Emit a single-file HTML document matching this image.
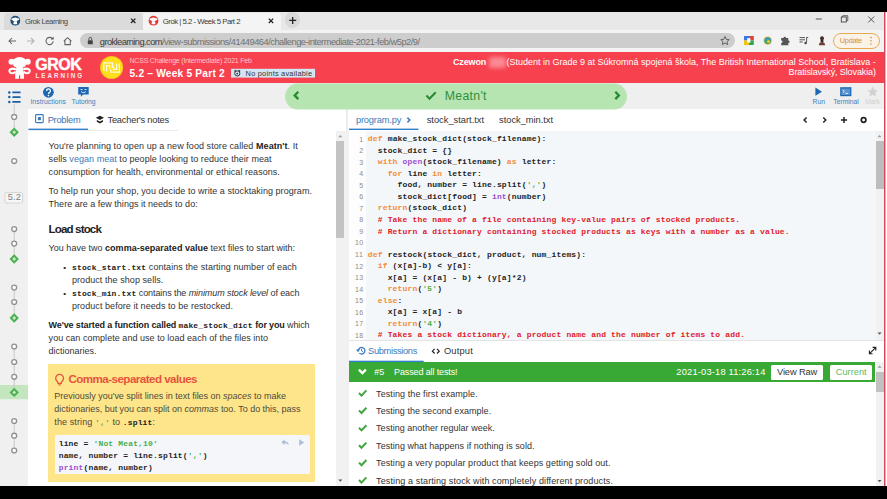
<!DOCTYPE html>
<html lang="en"><head><meta charset="utf-8"><title>Grok | 5.2 - Week 5 Part 2</title>
<style>
*{box-sizing:border-box;margin:0;padding:0}
html,body{width:887px;height:499px;overflow:hidden;background:#fff}
body{position:relative;font-family:"Liberation Sans",sans-serif;color:#333}
.a{position:absolute}
.t{position:absolute;white-space:pre}
.t span{white-space:pre}
svg{position:absolute;overflow:visible}
</style></head><body>
<!-- window chrome -->
<div class="a" style="left:0;top:0;width:887px;height:12px;background:#000"></div>
<div class="a" style="left:0;top:12px;width:884px;height:18px;background:#e8e8e8"></div>
<div class="a" style="left:4px;top:13px;width:139px;height:16.5px;background:#dbdbdb;border-radius:4px 4px 0 0"></div>
<div class="a" style="left:143px;top:13px;width:138px;height:17px;background:#f4f4f4;border-radius:4px 4px 0 0"></div>
<div class="a" style="left:284.8px;top:12px;width:15.6px;height:15.6px;border-radius:50%;background:#d9d9d9"></div>
<div class="a" style="left:0;top:29.5px;width:884px;height:22.5px;background:#f3f3f3"></div>
<div class="a" style="left:80px;top:33px;width:655px;height:15px;border-radius:7.5px;background:#cdcdcd"></div>
<div class="a" style="left:832.5px;top:33px;width:47px;height:15.5px;border-radius:8px;border:1px solid #e9a953;background:#fbf3e8"></div>
<!-- grok header -->
<div class="a" style="left:0;top:52px;width:884px;height:31px;background:#f7414f"></div>
<div class="a" style="left:0;top:83px;width:884px;height:26px;background:#efefef"></div>
<!-- left sidebar / problem pane -->
<div class="a" style="left:0;top:109px;width:28px;height:377px;background:#f0f0f0"></div>
<div class="a" style="left:28px;top:109px;width:316px;height:377px;background:#fff"></div>
<div class="a" style="left:28px;top:130px;width:150px;height:1px;background:#ededed"></div>
<div class="a" style="left:336px;top:131px;width:12.5px;height:355px;background:#f1f1f1"></div>
<div class="a" style="left:336px;top:141px;width:8px;height:97px;background:#c3c3c3"></div>
<div class="a" style="left:346px;top:109px;width:1.5px;height:22px;background:#ececec"></div>
<!-- right pane -->
<div class="a" style="left:349px;top:131px;width:535px;height:209.5px;background:#fdfdfd"></div>
<div class="a" style="left:366px;top:131px;width:510px;height:209.5px;background:#f4f7fa"></div>
<div class="a" style="left:875.5px;top:131px;width:8.5px;height:209.5px;background:#f1f1f1"></div>
<div class="a" style="left:349px;top:340px;width:535px;height:1px;background:#e4e4e4"></div>
<div class="a" style="left:875.5px;top:141px;width:8px;height:48px;background:#bdbdbd"></div>
<div class="a" style="left:349px;top:362px;width:526px;height:20px;background:#39a935"></div>
<div class="a" style="left:771px;top:365px;width:52px;height:14.5px;background:#fff;border-radius:1.5px"></div>
<div class="a" style="left:829.5px;top:365px;width:42.5px;height:14.5px;background:#fff;border-radius:1.5px"></div>
<div class="a" style="left:875.5px;top:362px;width:8.5px;height:124px;background:#f1f1f1"></div>
<div class="a" style="left:875.5px;top:371.5px;width:8px;height:20px;background:#c1c1c1"></div>
<!-- hint box -->
<div class="a" style="left:48.2px;top:364px;width:266.6px;height:118px;background:#fee58a"></div>
<div class="a" style="left:55px;top:434.5px;width:254.5px;height:39.5px;background:#f4f6f9;border-radius:1.5px"></div>
<svg width="887" height="499" viewBox="0 0 887 499" style="left:0;top:0">
<rect x="285" y="83.6" width="342" height="25.9" rx="12.9" fill="#b7e5b2"/>
<circle cx="15.3" cy="20.7" r="4.9" fill="#1d4e7e"/><g fill="#fff"><ellipse cx="15.3" cy="19.5" rx="2.7" ry="2"/><circle cx="12.4" cy="19.2" r="1.05"/><circle cx="18.2" cy="19.2" r="1.05"/><path d="M13.8,21.3h3l0.5,3h-4z"/></g>
<circle cx="153.5" cy="20.7" r="4.9" fill="#e23b33"/><g fill="#fff"><ellipse cx="153.5" cy="19.5" rx="2.7" ry="2"/><circle cx="150.6" cy="19.2" r="1.05"/><circle cx="156.4" cy="19.2" r="1.05"/><path d="M152.0,21.3h3l0.5,3h-4z"/></g>
<path d="M131.0,18.6l4.4,4.4m0,-4.4l-4.4,4.4" stroke="#222" stroke-width="1.3" fill="none"/>
<path d="M268.8,18.6l4.4,4.4m0,-4.4l-4.4,4.4" stroke="#222" stroke-width="1.3" fill="none"/>
<path d="M289.2,20.4h7M292.7,16.9v7" stroke="#222" stroke-width="1.3" fill="none"/>
<path d="M815.8,19h6" stroke="#444" stroke-width="0.9"/>
<rect x="841.3" y="17" width="5" height="5" fill="none" stroke="#444" stroke-width="0.9"/><path d="M842.8,17v-1.3h5v5h-1.3" fill="none" stroke="#444" stroke-width="0.8"/>
<path d="M868.2,16.5l6,6m0,-6l-6,6" stroke="#444" stroke-width="0.9"/>
<path d="M9,41h7M12,38l-3,3l3,3" stroke="#626262" stroke-width="1.05" fill="none"/>
<path d="M27,41h7M31,38l3,3l-3,3" stroke="#b5b5b5" stroke-width="1.1" fill="none"/>
<path d="M52.3,38.6a3.6,3.6 0 1 0 0.9,2.6" stroke="#626262" stroke-width="1.05" fill="none"/><path d="M53.6,36.6v3h-3z" fill="#555"/>
<path d="M63.8,41.2l3.8,-3.6l3.8,3.6M64.9,40.6v4h5.4v-4" stroke="#626262" stroke-width="1.05" fill="none"/>
<rect x="87.8" y="40.3" width="5" height="4" rx="0.6" fill="#444"/><path d="M88.9,40.3v-1.5a1.4,1.4 0 0 1 2.8,0v1.5" stroke="#444" stroke-width="0.9" fill="none"/>
<path d="M725,36.6l1.25,2.7l2.95,0.35l-2.2,2l0.6,2.9l-2.6,-1.5l-2.6,1.5l0.6,-2.9l-2.2,-2l2.95,-0.35z" fill="none" stroke="#555" stroke-width="0.9"/>
<rect x="744" y="36" width="5" height="4.5" fill="#3b78e7"/><rect x="749" y="36" width="4.8" height="4.5" fill="#db4437"/><rect x="744" y="40.5" width="5" height="4.5" fill="#f4c20d"/><rect x="749" y="40.5" width="4.8" height="4.5" fill="#2da94f"/><rect x="747.2" y="38.2" width="3.2" height="4.4" fill="#fff"/>
<circle cx="767.7" cy="40.6" r="4.6" fill="#f7d9b0"/><circle cx="767.7" cy="40.6" r="3.6" fill="#49a75a"/><path d="M764.5,40.6a3.3,3.3 0 0 1 6.4,0z" fill="#4a90d9"/><circle cx="768.5" cy="41.5" r="1.5" fill="#f2c230"/>
<path d="M781.2,38h2.3a1.3,1.3 0 1 1 2.6,0h2.2v2.4a1.3,1.3 0 1 1 0,2.6v2.2h-7.1v-2.2a1.3,1.3 0 1 0 0,-2.6z" fill="#565656"/>
<path d="M799.5,37.6h5.5M799.5,39.8h5.5M799.5,42h3.2" stroke="#444" stroke-width="0.9"/><path d="M806.6,37.4v5" stroke="#444" stroke-width="0.9"/><circle cx="805.6" cy="43" r="1.3" fill="#444"/><path d="M806.6,37.4h1.6" stroke="#444" stroke-width="0.9"/>
<circle cx="822" cy="38.2" r="1.9" fill="#3a2a22"/><path d="M818.9,45.2c0,-4.2 6.2,-4.2 6.2,0z" fill="#6b3f36"/><rect x="820.6" y="39.5" width="2.8" height="2.6" fill="#3a2a22"/>
<circle cx="871" cy="37.6" r="0.8" fill="#d58f3c"/>
<circle cx="871" cy="40.8" r="0.8" fill="#d58f3c"/>
<circle cx="871" cy="44" r="0.8" fill="#d58f3c"/>
<g fill="#fff"><ellipse cx="19.6" cy="62.6" rx="7.3" ry="5.6"/><circle cx="11.5" cy="61.7" r="3"/><circle cx="27.7" cy="61.7" r="3"/><path d="M16.4,67h6.4l1.4,8.2h-9.2z"/><path d="M15.2,74.4h3.8v4.3h-3.8zM20.2,74.4h3.8v4.3h-3.8z"/></g><path d="M16,69.4c-4.6,-1.9 -8,0.5 -6,2.9c1.3,1.5 3.6,0.8 5.6,-0.5M23.2,69.4c4.6,-1.9 8,0.5 6,2.9c-1.3,1.5 -3.6,0.8 -5.6,-0.5" stroke="#fff" stroke-width="2.1" fill="none"/>
<circle cx="111.6" cy="67.5" r="11.6" fill="#f5b820"/><circle cx="111.6" cy="67.5" r="10.8" fill="#ffdf1c"/>
<path d="M103.8,71.2v-8.3h8.6v5.2 M106.6,71.2v-5.6h3v3.2 M119.4,63.8v8.4h-8.6v-3 M116.6,63.8v5.6h-3v-3" stroke="#fffbe0" stroke-width="1.25" fill="none"/>
<rect x="231" y="68.8" width="84" height="8.8" fill="#d3e5f3"/>
<circle cx="237.3" cy="73.4" r="2.6" fill="none" stroke="#333" stroke-width="1"/><circle cx="235.2" cy="70.9" r="0.9" fill="#333"/><circle cx="239.4" cy="70.9" r="0.9" fill="#333"/><circle cx="237.3" cy="73.6" r="0.9" fill="#333"/>
<circle cx="9.3" cy="92.4" r="1.25" fill="#1b5fa8"/><rect x="12.3" y="91.5" width="8.3" height="1.8" rx="0.5" fill="#1b5fa8"/>
<circle cx="9.3" cy="97.1" r="1.25" fill="#1b5fa8"/><rect x="12.3" y="96.19999999999999" width="8.3" height="1.8" rx="0.5" fill="#1b5fa8"/>
<circle cx="9.3" cy="101.9" r="1.25" fill="#1b5fa8"/><rect x="12.3" y="101.0" width="8.3" height="1.8" rx="0.5" fill="#1b5fa8"/>
<circle cx="48.4" cy="92.3" r="5.4" fill="#1c68b3"/>
<path d="M46.6,90.9a1.9,1.9 0 1 1 2.8,1.6c-0.7,0.4 -0.9,0.7 -0.9,1.5" stroke="#fff" stroke-width="1.3" fill="none"/><circle cx="48.45" cy="95.6" r="0.8" fill="#fff"/>
<path d="M78.2,87.1h10.5v7.4h-5.6l-2.2,2.2v-2.2h-2.7z" fill="#1c68b3"/><path d="M80.6,89.6h1.8M84.6,89.6h1.8M81.2,91.7c1.2,1.2 3.4,1.2 4.6,0" stroke="#fff" stroke-width="0.9" fill="none"/>
<path d="M298.3,91.7l-3.6,3.7l3.6,3.7" stroke="#258a32" stroke-width="2.3" fill="none"/>
<path d="M615.3,91.7l3.6,3.7l-3.6,3.7" stroke="#258a32" stroke-width="2.3" fill="none"/>
<path d="M426.4,95.6l3.1,3.1l6.2,-6.4" stroke="#2a8a34" stroke-width="2.1" fill="none"/>
<path d="M815.4,87.6v8.2l6.6,-4.1z" fill="#1c68b3"/>
<rect x="840.2" y="87.2" width="11.2" height="9" fill="#1c68b3"/><rect x="841.4" y="88.6" width="8.8" height="6.4" fill="#5b93cf"/><path d="M842.8,90l1.6,1.4l-1.6,1.4M845.4,93.4h2.6" stroke="#fff" stroke-width="0.8" fill="none"/>
<path d="M872.7,86.6l1.6,3.3l3.6,0.5l-2.6,2.5l0.6,3.6l-3.2,-1.7l-3.2,1.7l0.6,-3.6l-2.6,-2.5l3.6,-0.5z" fill="#d2d2d2"/>
<rect x="0" y="385" width="28" height="14.2" fill="#c3e6bf"/>
<path d="M14.2,104V132" stroke="#c9c9c9" stroke-width="1"/>
<path d="M14.2,229V259" stroke="#c9c9c9" stroke-width="1"/>
<path d="M14.2,287.6V318" stroke="#c9c9c9" stroke-width="1"/>
<path d="M14.2,346.5V392.4" stroke="#c9c9c9" stroke-width="1"/>
<path d="M14.2,421V450.5" stroke="#c9c9c9" stroke-width="1"/>
<circle cx="14.2" cy="116.9" r="2.45" fill="#fff" stroke="#929292" stroke-width="1.35"/>
<circle cx="14.2" cy="161" r="2.45" fill="#fff" stroke="#929292" stroke-width="1.35"/>
<circle cx="14.2" cy="229" r="2.45" fill="#fff" stroke="#929292" stroke-width="1.35"/>
<circle cx="14.2" cy="243.6" r="2.45" fill="#fff" stroke="#929292" stroke-width="1.35"/>
<circle cx="14.2" cy="287.6" r="2.45" fill="#fff" stroke="#929292" stroke-width="1.35"/>
<circle cx="14.2" cy="302" r="2.45" fill="#fff" stroke="#929292" stroke-width="1.35"/>
<circle cx="14.2" cy="346.5" r="2.45" fill="#fff" stroke="#929292" stroke-width="1.35"/>
<circle cx="14.2" cy="362" r="2.45" fill="#fff" stroke="#929292" stroke-width="1.35"/>
<circle cx="14.2" cy="376.8" r="2.45" fill="#fff" stroke="#929292" stroke-width="1.35"/>
<circle cx="14.2" cy="421" r="2.45" fill="#fff" stroke="#929292" stroke-width="1.35"/>
<circle cx="14.2" cy="435.7" r="2.45" fill="#fff" stroke="#929292" stroke-width="1.35"/>
<circle cx="14.2" cy="450.5" r="2.45" fill="#fff" stroke="#929292" stroke-width="1.35"/>
<path d="M14.2,127.49999999999999l4.7,4.7l-4.7,4.7l-4.7,-4.7z" fill="#4bb04f"/><path d="M14.2,130.29999999999998l1.9,1.9l-1.9,1.9l-1.9,-1.9z" fill="#c9ecc6"/>
<path d="M14.2,254.3l4.7,4.7l-4.7,4.7l-4.7,-4.7z" fill="#4bb04f"/><path d="M14.2,257.1l1.9,1.9l-1.9,1.9l-1.9,-1.9z" fill="#c9ecc6"/>
<path d="M14.2,313.3l4.7,4.7l-4.7,4.7l-4.7,-4.7z" fill="#4bb04f"/><path d="M14.2,316.1l1.9,1.9l-1.9,1.9l-1.9,-1.9z" fill="#c9ecc6"/>
<path d="M14.2,387.7l4.7,4.7l-4.7,4.7l-4.7,-4.7z" fill="#4bb04f"/><path d="M14.2,390.5l1.9,1.9l-1.9,1.9l-1.9,-1.9z" fill="#c9ecc6"/>
<rect x="5" y="192.6" width="17.6" height="10.4" rx="1" fill="#f7f7f7" stroke="#d0d0d0" stroke-width="0.9"/>
<rect x="35.6" y="114.6" width="7.6" height="8" rx="0.8" fill="none" stroke="#3a7ab8" stroke-width="1.1"/><rect x="37.9" y="117" width="3" height="3.2" fill="#3a7ab8"/>
<path d="M95.8,117.8l4.1,-2.1l4.1,2.1l-4.1,2.1z M96.8,119.9l3.1,1.6l3.1,-1.6v1.9l-3.1,1.7l-3.1,-1.7z" fill="#222"/>
<path d="M338.3,137.3l2,-2.2l2,2.2z" fill="#9a9a9a"/>
<path d="M338.3,479.5l2,2.2l2,-2.2z" fill="#555"/>
<path d="M877.6,137.3l2,-2.2l2,2.2z" fill="#9a9a9a"/>
<path d="M877.6,332.6l2,2.2l2,-2.2z" fill="#555"/>
<path d="M877.6,367.8l2,-2.2l2,2.2z" fill="#9a9a9a"/>
<path d="M877.6,480l2,2.2l2,-2.2z" fill="#555"/>
<path d="M407.4,117.6l2.4,2.4l-2.4,2.4" stroke="#3a7ab8" stroke-width="1.5" fill="none"/>
<path d="M806.6,117.4l-2.5,2.6l2.5,2.6" stroke="#222" stroke-width="1.5" fill="none"/>
<path d="M823.3,117.4l2.5,2.6l-2.5,2.6" stroke="#222" stroke-width="1.5" fill="none"/>
<path d="M840.9,120h6.2M844,116.9v6.2" stroke="#222" stroke-width="1.5" fill="none"/>
<circle cx="863.6" cy="120" r="2.3" fill="none" stroke="#222" stroke-width="1.7"/>
<path d="M358.3,350.6a3.3,3.3 0 1 1 1,2.5" fill="none" stroke="#3a7ab8" stroke-width="1.3"/><path d="M361.5,348.8v2l1.5,0.9" stroke="#3a7ab8" stroke-width="1" fill="none"/><path d="M356,349.6l2.1,2.6l1.9,-2.6z" fill="#3a7ab8"/>
<path d="M434.6,348.9l-2.2,2.3l2.2,2.3M437,348.9l2.2,2.3l-2.2,2.3" stroke="#222" stroke-width="1.2" fill="none"/>
<path d="M869.6,353.6l6,-6M872.6,347.4h3.2v3.2M872.6,353.8h-3.2v-3.2" stroke="#222" stroke-width="1.1" fill="none"/>
<path d="M358.9,369.6l3.5,3.5l3.5,-3.5" stroke="#fff" stroke-width="2.3" fill="none"/>
<path d="M359,393.0l2.5,2.6l4.9,-5.2" stroke="#3fa63f" stroke-width="2" fill="none"/>
<path d="M359,410.4l2.5,2.6l4.9,-5.2" stroke="#3fa63f" stroke-width="2" fill="none"/>
<path d="M359,427.8l2.5,2.6l4.9,-5.2" stroke="#3fa63f" stroke-width="2" fill="none"/>
<path d="M359,445.2l2.5,2.6l4.9,-5.2" stroke="#3fa63f" stroke-width="2" fill="none"/>
<path d="M359,462.6l2.5,2.6l4.9,-5.2" stroke="#3fa63f" stroke-width="2" fill="none"/>
<path d="M359,480.0l2.5,2.6l4.9,-5.2" stroke="#3fa63f" stroke-width="2" fill="none"/>
<path d="M57.2,381.4a3.9,3.9 0 1 1 4.8,0c-0.6,0.6 -0.8,1.1 -0.8,2h-3.2c0,-0.9 -0.2,-1.4 -0.8,-2z" fill="none" stroke="#e8533f" stroke-width="1.3"/><path d="M58.3,384.9h2.6" stroke="#e8533f" stroke-width="1.1"/>
<path d="M281.4,442.2l3.1,-2.8v1.8c3,0 4.2,1.7 4.2,4.3c-0.9,-1.7 -2.1,-2.2 -4.2,-2.2v1.8z" fill="#a9c0da"/>
<path d="M299.2,439.3v6.4l5,-3.2z" fill="#a9c0da"/>
<rect x="28.5" y="128.6" width="59.6" height="1.4" fill="#2f7fca"/>
<rect x="349" y="128.6" width="69.4" height="1.4" fill="#2f7fca"/>
<rect x="349" y="360.7" width="74.7" height="1.4" fill="#2f7fca"/>
</svg>
<div class="a" style="left:488.5px;top:56.5px;width:17px;height:11px;background:#f98a93;filter:blur(2px);border-radius:3px"></div>
<div class="t" style="left:24.9px;top:15.77px;font:7.8px/11px 'Liberation Sans',sans-serif;color:#4a4a4a;"><span style="font:7.8px/11px 'Liberation Sans',sans-serif;letter-spacing:-0.509px;">Grok Learning</span></div>
<div class="t" style="left:162.8px;top:15.77px;font:7.8px/11px 'Liberation Sans',sans-serif;color:#3a3a3a;"><span style="font:7.8px/11px 'Liberation Sans',sans-serif;letter-spacing:-0.503px;">Grok | 5.2 - Week 5 Part 2</span></div>
<div class="t" style="left:99.8px;top:35.66px;font:9.3px/13px 'Liberation Sans',sans-serif;color:#333;"><span style="font:9.3px/13px 'Liberation Sans',sans-serif;color:#3c3c3c;letter-spacing:-0.576px;">groklearning.com</span><span style="font:9.3px/13px 'Liberation Sans',sans-serif;color:#707070;letter-spacing:-0.504px;">/view-submissions/41449464/challenge-intermediate-2021-feb/w5p2/9/</span></div>
<div class="t" style="left:839.8px;top:36.34px;font:7.4px/10px 'Liberation Sans',sans-serif;color:#d58f3c;"><span style="font:7.4px/10px 'Liberation Sans',sans-serif;letter-spacing:-0.307px;">Update</span></div>
<div class="t" style="left:35.2px;top:53.56px;font:bold 16px/22px 'Liberation Sans',sans-serif;color:#fff;-webkit-text-stroke:0.45px #fff"><span style="font:bold 16px/22px 'Liberation Sans',sans-serif;letter-spacing:-0.450px;">GROK</span></div>
<div class="t" style="left:35.4px;top:71.48px;font:bold 6.3px/9px 'Liberation Sans',sans-serif;color:#fde6e8;"><span style="font:bold 6.3px/9px 'Liberation Sans',sans-serif;letter-spacing:1.989px;">LEARNING</span></div>
<div class="t" style="left:129.5px;top:56.42px;font:7.0px/10px 'Liberation Sans',sans-serif;color:#fcc5cb;"><span style="font:7.0px/10px 'Liberation Sans',sans-serif;letter-spacing:-0.204px;">NCSS Challenge (Intermediate) 2021 Feb</span></div>
<div class="t" style="left:129.5px;top:66.81px;font:bold 10.2px/14px 'Liberation Sans',sans-serif;color:#fff;"><span style="font:bold 10.2px/14px 'Liberation Sans',sans-serif;letter-spacing:0.202px;">5.2 – Week 5 Part 2</span></div>
<div class="t" style="left:245.6px;top:68.84px;font:7.4px/10px 'Liberation Sans',sans-serif;color:#333;"><span style="font:7.4px/10px 'Liberation Sans',sans-serif;letter-spacing:0.224px;">No points available</span></div>
<div class="t" style="left:453.0px;top:55.64px;font:bold 9px/13px 'Liberation Sans',sans-serif;color:#fff;"><span style="font:bold 9px/13px 'Liberation Sans',sans-serif;letter-spacing:-0.136px;">Czewon</span></div>
<div class="t" style="left:506.6px;top:55.64px;font:9px/13px 'Liberation Sans',sans-serif;color:#fff;"><span style="font:9px/13px 'Liberation Sans',sans-serif;letter-spacing:-0.004px;">(Student in Grade 9 at Súkromná spojená škola, The British International School, Bratislava -</span></div>
<div class="t" style="left:788.5px;top:66.34px;font:9px/13px 'Liberation Sans',sans-serif;color:#fff;"><span style="font:9px/13px 'Liberation Sans',sans-serif;letter-spacing:-0.119px;">Bratislavský, Slovakia)</span></div>
<div class="t" style="left:30.4px;top:96.91px;font:6.8px/10px 'Liberation Sans',sans-serif;color:#3e7fbd;"><span style="font:6.8px/10px 'Liberation Sans',sans-serif;letter-spacing:0.070px;">Instructions</span></div>
<div class="t" style="left:71.4px;top:96.91px;font:6.8px/10px 'Liberation Sans',sans-serif;color:#3e7fbd;"><span style="font:6.8px/10px 'Liberation Sans',sans-serif;letter-spacing:-0.086px;">Tutoring</span></div>
<div class="t" style="left:444.7px;top:87.54px;font:12.3px/17px 'Liberation Sans',sans-serif;color:#2f8f3b;"><span style="font:12.3px/17px 'Liberation Sans',sans-serif;letter-spacing:0.307px;">Meatn&#x27;t</span></div>
<div class="t" style="left:812.6px;top:96.71px;font:6.8px/10px 'Liberation Sans',sans-serif;color:#3e7fbd;"><span style="font:6.8px/10px 'Liberation Sans',sans-serif;letter-spacing:-0.056px;">Run</span></div>
<div class="t" style="left:833.3px;top:96.71px;font:6.8px/10px 'Liberation Sans',sans-serif;color:#3e7fbd;"><span style="font:6.8px/10px 'Liberation Sans',sans-serif;letter-spacing:-0.036px;">Terminal</span></div>
<div class="t" style="left:865.2px;top:96.71px;font:6.8px/10px 'Liberation Sans',sans-serif;color:#d0d0d0;"><span style="font:6.8px/10px 'Liberation Sans',sans-serif;letter-spacing:-0.152px;">Mark</span></div>
<div class="t" style="left:47.7px;top:113.66px;font:9.3px/13px 'Liberation Sans',sans-serif;color:#2f74b5;"><span style="font:9.3px/13px 'Liberation Sans',sans-serif;letter-spacing:-0.275px;">Problem</span></div>
<div class="t" style="left:107.5px;top:113.66px;font:9.3px/13px 'Liberation Sans',sans-serif;color:#333;"><span style="font:9.3px/13px 'Liberation Sans',sans-serif;letter-spacing:-0.222px;">Teacher&#x27;s notes</span></div>
<div class="t" style="left:7.7px;top:191.46px;font:9.3px/13px 'Liberation Sans',sans-serif;color:#808080;"><span style="font:9.3px/13px 'Liberation Sans',sans-serif;letter-spacing:0.188px;">5.2</span></div>
<div class="t" style="left:48.6px;top:139.54px;font:9.0px/13px 'Liberation Sans',sans-serif;color:#333;"><span style="font:9.0px/13px 'Liberation Sans',sans-serif;letter-spacing:0.066px;">You&#x27;re planning to open up a new food store called </span><span style="font:bold 9.0px/13px 'Liberation Sans',sans-serif;color:#222;letter-spacing:0.066px;">Meatn&#x27;t</span><span style="font:9.0px/13px 'Liberation Sans',sans-serif;letter-spacing:0.066px;">. It</span></div>
<div class="t" style="left:48.6px;top:152.54px;font:9.0px/13px 'Liberation Sans',sans-serif;color:#333;"><span style="font:9.0px/13px 'Liberation Sans',sans-serif;letter-spacing:0.043px;">sells </span><span style="font:9.0px/13px 'Liberation Sans',sans-serif;color:#3a7ab8;letter-spacing:0.043px;">vegan meat</span><span style="font:9.0px/13px 'Liberation Sans',sans-serif;letter-spacing:0.043px;"> to people looking to reduce their meat</span></div>
<div class="t" style="left:48.6px;top:165.54px;font:9.0px/13px 'Liberation Sans',sans-serif;color:#333;"><span style="font:9.0px/13px 'Liberation Sans',sans-serif;letter-spacing:0.047px;">consumption for health, environmental or ethical reasons.</span></div>
<div class="t" style="left:48.6px;top:184.64px;font:9.0px/13px 'Liberation Sans',sans-serif;color:#333;"><span style="font:9.0px/13px 'Liberation Sans',sans-serif;letter-spacing:0.050px;">To help run your shop, you decide to write a stocktaking program.</span></div>
<div class="t" style="left:48.6px;top:198.04px;font:9.0px/13px 'Liberation Sans',sans-serif;color:#333;"><span style="font:9.0px/13px 'Liberation Sans',sans-serif;letter-spacing:0.013px;">There are a few things it needs to do:</span></div>
<div class="t" style="left:48.6px;top:220.80px;font:bold 11.6px/16px 'Liberation Sans',sans-serif;color:#222;"><span style="font:bold 11.6px/16px 'Liberation Sans',sans-serif;letter-spacing:-0.880px;">Load stock</span></div>
<div class="t" style="left:48.6px;top:241.64px;font:9.0px/13px 'Liberation Sans',sans-serif;color:#333;"><span style="font:9.0px/13px 'Liberation Sans',sans-serif;letter-spacing:0.020px;">You have two </span><span style="font:bold 9.0px/13px 'Liberation Sans',sans-serif;color:#222;letter-spacing:0.020px;">comma-separated value</span><span style="font:9.0px/13px 'Liberation Sans',sans-serif;letter-spacing:0.020px;"> text files to start with:</span></div>
<div class="t" style="left:63.2px;top:262.08px;font:8px/11px 'Liberation Sans',sans-serif;color:#222;"><span style="font:8px/11px 'Liberation Sans',sans-serif;letter-spacing:0.388px;">•</span></div>
<div class="t" style="left:72.0px;top:261.14px;font:9.0px/13px 'Liberation Sans',sans-serif;color:#333;"><span style="font:bold 8.0px/13px 'Liberation Mono',monospace;color:#222;letter-spacing:0.149px;">stock_start.txt</span><span style="font:9.0px/13px 'Liberation Sans',sans-serif;letter-spacing:0.069px;"> contains the starting number of each</span></div>
<div class="t" style="left:72.0px;top:273.84px;font:9.0px/13px 'Liberation Sans',sans-serif;color:#333;"><span style="font:9.0px/13px 'Liberation Sans',sans-serif;letter-spacing:0.058px;">product the shop sells.</span></div>
<div class="t" style="left:63.2px;top:287.98px;font:8px/11px 'Liberation Sans',sans-serif;color:#222;"><span style="font:8px/11px 'Liberation Sans',sans-serif;letter-spacing:0.388px;">•</span></div>
<div class="t" style="left:72.0px;top:287.04px;font:9.0px/13px 'Liberation Sans',sans-serif;color:#333;"><span style="font:bold 8.0px/13px 'Liberation Mono',monospace;color:#222;letter-spacing:0.148px;">stock_min.txt</span><span style="font:9.0px/13px 'Liberation Sans',sans-serif;letter-spacing:-0.087px;"> contains the </span><span style="font:italic 9.0px/13px 'Liberation Sans',sans-serif;letter-spacing:-0.087px;">minimum stock level</span><span style="font:9.0px/13px 'Liberation Sans',sans-serif;letter-spacing:-0.087px;"> of each</span></div>
<div class="t" style="left:72.0px;top:299.84px;font:9.0px/13px 'Liberation Sans',sans-serif;color:#333;"><span style="font:9.0px/13px 'Liberation Sans',sans-serif;letter-spacing:0.060px;">product before it needs to be restocked.</span></div>
<div class="t" style="left:48.6px;top:319.24px;font:9.0px/13px 'Liberation Sans',sans-serif;color:#333;"><span style="font:bold 9.0px/13px 'Liberation Sans',sans-serif;color:#222;letter-spacing:-0.128px;">We&#x27;ve started a function called </span><span style="font:bold 8.0px/13px 'Liberation Mono',monospace;color:#222;letter-spacing:0.149px;">make_stock_dict</span><span style="font:bold 9.0px/13px 'Liberation Sans',sans-serif;color:#222;letter-spacing:-0.128px;"> for you</span><span style="font:9.0px/13px 'Liberation Sans',sans-serif;letter-spacing:-0.128px;"> which</span></div>
<div class="t" style="left:48.6px;top:331.94px;font:9.0px/13px 'Liberation Sans',sans-serif;color:#333;"><span style="font:9.0px/13px 'Liberation Sans',sans-serif;letter-spacing:0.041px;">you can complete and use to load each of the files into</span></div>
<div class="t" style="left:48.6px;top:344.84px;font:9.0px/13px 'Liberation Sans',sans-serif;color:#333;"><span style="font:9.0px/13px 'Liberation Sans',sans-serif;letter-spacing:-0.002px;">dictionaries.</span></div>
<div class="t" style="left:68.4px;top:371.20px;font:bold 11.6px/16px 'Liberation Sans',sans-serif;color:#e8533f;"><span style="font:bold 11.6px/16px 'Liberation Sans',sans-serif;letter-spacing:-0.540px;">Comma-separated values</span></div>
<div class="t" style="left:54.3px;top:389.94px;font:9.0px/13px 'Liberation Sans',sans-serif;color:#4f4a3a;"><span style="font:9.0px/13px 'Liberation Sans',sans-serif;letter-spacing:-0.011px;">Previously you&#x27;ve split lines in text files on </span><span style="font:italic 9.0px/13px 'Liberation Sans',sans-serif;letter-spacing:-0.011px;">spaces</span><span style="font:9.0px/13px 'Liberation Sans',sans-serif;letter-spacing:-0.011px;"> to make</span></div>
<div class="t" style="left:54.3px;top:402.54px;font:9.0px/13px 'Liberation Sans',sans-serif;color:#4f4a3a;"><span style="font:9.0px/13px 'Liberation Sans',sans-serif;letter-spacing:-0.012px;">dictionaries, but you can split on </span><span style="font:italic 9.0px/13px 'Liberation Sans',sans-serif;letter-spacing:-0.012px;">commas</span><span style="font:9.0px/13px 'Liberation Sans',sans-serif;letter-spacing:-0.012px;"> too. To do this, pass</span></div>
<div class="t" style="left:54.3px;top:415.54px;font:9.0px/13px 'Liberation Sans',sans-serif;color:#4f4a3a;"><span style="font:9.0px/13px 'Liberation Sans',sans-serif;letter-spacing:0.105px;">the string </span><span style="font:bold 8.0px/13px 'Liberation Mono',monospace;color:#4caf50;letter-spacing:0.148px;">&#x27;,&#x27;</span><span style="font:9.0px/13px 'Liberation Sans',sans-serif;letter-spacing:0.105px;"> to </span><span style="font:bold 8.0px/13px 'Liberation Mono',monospace;color:#222;letter-spacing:0.148px;">.split</span><span style="font:9.0px/13px 'Liberation Sans',sans-serif;letter-spacing:0.105px;">:</span></div>
<div class="t" style="left:58.7px;top:437.78px;font:bold 8.0px/11px 'Liberation Mono',monospace;color:#1e1e1e;"><span style="font:bold 8.0px/11px 'Liberation Mono',monospace;color:#1e1e1e;letter-spacing:0.164px;">line = </span><span style="font:bold 8.0px/11px 'Liberation Mono',monospace;color:#4cae4f;letter-spacing:0.163px;">&#x27;Not Meat,10&#x27;</span></div>
<div class="t" style="left:58.7px;top:449.68px;font:bold 8.0px/11px 'Liberation Mono',monospace;color:#1e1e1e;"><span style="font:bold 8.0px/11px 'Liberation Mono',monospace;color:#1e1e1e;letter-spacing:0.164px;">name, number = line.split(</span><span style="font:bold 8.0px/11px 'Liberation Mono',monospace;color:#4cae4f;letter-spacing:0.163px;">&#x27;,&#x27;</span><span style="font:bold 8.0px/11px 'Liberation Mono',monospace;color:#1e1e1e;letter-spacing:0.152px;">)</span></div>
<div class="t" style="left:58.7px;top:461.58px;font:bold 8.0px/11px 'Liberation Mono',monospace;color:#1e1e1e;"><span style="font:bold 8.0px/11px 'Liberation Mono',monospace;color:#9a4fd0;letter-spacing:0.162px;">print</span><span style="font:bold 8.0px/11px 'Liberation Mono',monospace;color:#1e1e1e;letter-spacing:0.164px;">(name, number)</span></div>
<div class="t" style="left:355.9px;top:113.96px;font:9.3px/13px 'Liberation Sans',sans-serif;color:#3a7ab8;"><span style="font:9.3px/13px 'Liberation Sans',sans-serif;letter-spacing:-0.173px;">program.py</span></div>
<div class="t" style="left:426.7px;top:113.96px;font:9.3px/13px 'Liberation Sans',sans-serif;color:#333;"><span style="font:9.3px/13px 'Liberation Sans',sans-serif;letter-spacing:0.003px;">stock_start.txt</span></div>
<div class="t" style="left:499.1px;top:113.96px;font:9.3px/13px 'Liberation Sans',sans-serif;color:#333;"><span style="font:9.3px/13px 'Liberation Sans',sans-serif;letter-spacing:-0.027px;">stock_min.txt</span></div>
<div class="t" style="left:359.3px;top:134.62px;font:7.0px/10px 'Liberation Sans',sans-serif;color:#8c8c8c;"><span style="font:7.0px/10px 'Liberation Sans',sans-serif;letter-spacing:0.294px;">1</span></div>
<div class="t" style="left:367.8px;top:133.28px;font:bold 8.0px/11px 'Liberation Mono',monospace;color:#1e1e1e;"><span style="font:bold 8.0px/11px 'Liberation Mono',monospace;color:#f28c38;letter-spacing:0.163px;">def</span><span style="font:bold 8.0px/11px 'Liberation Mono',monospace;color:#1e1e1e;letter-spacing:0.164px;"> make_stock_dict(stock_filename):</span></div>
<div class="t" style="left:359.3px;top:146.16px;font:7.0px/10px 'Liberation Sans',sans-serif;color:#8c8c8c;"><span style="font:7.0px/10px 'Liberation Sans',sans-serif;letter-spacing:0.294px;">2</span></div>
<div class="t" style="left:367.8px;top:144.81px;font:bold 8.0px/11px 'Liberation Mono',monospace;color:#1e1e1e;"><span style="font:bold 8.0px/11px 'Liberation Mono',monospace;color:#1e1e1e;letter-spacing:0.164px;">  stock_dict = {}</span></div>
<div class="t" style="left:359.3px;top:157.69px;font:7.0px/10px 'Liberation Sans',sans-serif;color:#8c8c8c;"><span style="font:7.0px/10px 'Liberation Sans',sans-serif;letter-spacing:0.294px;">3</span></div>
<div class="t" style="left:367.8px;top:156.35px;font:bold 8.0px/11px 'Liberation Mono',monospace;color:#1e1e1e;"><span style="font:bold 8.0px/11px 'Liberation Mono',monospace;color:#1e1e1e;letter-spacing:0.160px;">  </span><span style="font:bold 8.0px/11px 'Liberation Mono',monospace;color:#f28c38;letter-spacing:0.164px;">with</span><span style="font:bold 8.0px/11px 'Liberation Mono',monospace;color:#1e1e1e;letter-spacing:0.152px;"> </span><span style="font:bold 8.0px/11px 'Liberation Mono',monospace;color:#9a4fd0;letter-spacing:0.164px;">open</span><span style="font:bold 8.0px/11px 'Liberation Mono',monospace;color:#1e1e1e;letter-spacing:0.164px;">(stock_filename) </span><span style="font:bold 8.0px/11px 'Liberation Mono',monospace;color:#f28c38;letter-spacing:0.160px;">as</span><span style="font:bold 8.0px/11px 'Liberation Mono',monospace;color:#1e1e1e;letter-spacing:0.164px;"> letter:</span></div>
<div class="t" style="left:359.3px;top:169.23px;font:7.0px/10px 'Liberation Sans',sans-serif;color:#8c8c8c;"><span style="font:7.0px/10px 'Liberation Sans',sans-serif;letter-spacing:0.294px;">4</span></div>
<div class="t" style="left:367.8px;top:167.89px;font:bold 8.0px/11px 'Liberation Mono',monospace;color:#1e1e1e;"><span style="font:bold 8.0px/11px 'Liberation Mono',monospace;color:#1e1e1e;letter-spacing:0.164px;">    </span><span style="font:bold 8.0px/11px 'Liberation Mono',monospace;color:#f28c38;letter-spacing:0.163px;">for</span><span style="font:bold 8.0px/11px 'Liberation Mono',monospace;color:#1e1e1e;letter-spacing:0.163px;"> line </span><span style="font:bold 8.0px/11px 'Liberation Mono',monospace;color:#f28c38;letter-spacing:0.160px;">in</span><span style="font:bold 8.0px/11px 'Liberation Mono',monospace;color:#1e1e1e;letter-spacing:0.164px;"> letter:</span></div>
<div class="t" style="left:359.3px;top:180.76px;font:7.0px/10px 'Liberation Sans',sans-serif;color:#8c8c8c;"><span style="font:7.0px/10px 'Liberation Sans',sans-serif;letter-spacing:0.294px;">5</span></div>
<div class="t" style="left:367.8px;top:179.42px;font:bold 8.0px/11px 'Liberation Mono',monospace;color:#1e1e1e;"><span style="font:bold 8.0px/11px 'Liberation Mono',monospace;color:#1e1e1e;letter-spacing:0.164px;">      food, number = line.split(</span><span style="font:bold 8.0px/11px 'Liberation Mono',monospace;color:#4cae4f;letter-spacing:0.163px;">&#x27;,&#x27;</span><span style="font:bold 8.0px/11px 'Liberation Mono',monospace;color:#1e1e1e;letter-spacing:0.152px;">)</span></div>
<div class="t" style="left:359.3px;top:192.30px;font:7.0px/10px 'Liberation Sans',sans-serif;color:#8c8c8c;"><span style="font:7.0px/10px 'Liberation Sans',sans-serif;letter-spacing:0.294px;">6</span></div>
<div class="t" style="left:367.8px;top:190.96px;font:bold 8.0px/11px 'Liberation Mono',monospace;color:#1e1e1e;"><span style="font:bold 8.0px/11px 'Liberation Mono',monospace;color:#1e1e1e;letter-spacing:0.164px;">      stock_dict[food] = </span><span style="font:bold 8.0px/11px 'Liberation Mono',monospace;color:#9a4fd0;letter-spacing:0.163px;">int</span><span style="font:bold 8.0px/11px 'Liberation Mono',monospace;color:#1e1e1e;letter-spacing:0.164px;">(number)</span></div>
<div class="t" style="left:359.3px;top:203.83px;font:7.0px/10px 'Liberation Sans',sans-serif;color:#8c8c8c;"><span style="font:7.0px/10px 'Liberation Sans',sans-serif;letter-spacing:0.294px;">7</span></div>
<div class="t" style="left:367.8px;top:202.49px;font:bold 8.0px/11px 'Liberation Mono',monospace;color:#1e1e1e;"><span style="font:bold 8.0px/11px 'Liberation Mono',monospace;color:#1e1e1e;letter-spacing:0.160px;">  </span><span style="font:bold 8.0px/11px 'Liberation Mono',monospace;color:#f28c38;letter-spacing:0.163px;">return</span><span style="font:bold 8.0px/11px 'Liberation Mono',monospace;color:#1e1e1e;letter-spacing:0.164px;">(stock_dict)</span></div>
<div class="t" style="left:359.3px;top:215.37px;font:7.0px/10px 'Liberation Sans',sans-serif;color:#8c8c8c;"><span style="font:7.0px/10px 'Liberation Sans',sans-serif;letter-spacing:0.294px;">8</span></div>
<div class="t" style="left:367.8px;top:214.03px;font:bold 8.0px/11px 'Liberation Mono',monospace;color:#1e1e1e;"><span style="font:bold 8.0px/11px 'Liberation Mono',monospace;color:#1e1e1e;letter-spacing:0.160px;">  </span><span style="font:bold 8.0px/11px 'Liberation Mono',monospace;color:#e0202a;letter-spacing:0.164px;"># Take the name of a file containing key-value pairs of stocked products.</span></div>
<div class="t" style="left:359.3px;top:226.90px;font:7.0px/10px 'Liberation Sans',sans-serif;color:#8c8c8c;"><span style="font:7.0px/10px 'Liberation Sans',sans-serif;letter-spacing:0.294px;">9</span></div>
<div class="t" style="left:367.8px;top:225.56px;font:bold 8.0px/11px 'Liberation Mono',monospace;color:#1e1e1e;"><span style="font:bold 8.0px/11px 'Liberation Mono',monospace;color:#1e1e1e;letter-spacing:0.160px;">  </span><span style="font:bold 8.0px/11px 'Liberation Mono',monospace;color:#e0202a;letter-spacing:0.164px;"># Return a dictionary containing stocked products as keys with a number as a value.</span></div>
<div class="t" style="left:355.1px;top:238.44px;font:7.0px/10px 'Liberation Sans',sans-serif;color:#8c8c8c;"><span style="font:7.0px/10px 'Liberation Sans',sans-serif;letter-spacing:0.302px;">10</span></div>
<div class="t" style="left:355.1px;top:249.97px;font:7.0px/10px 'Liberation Sans',sans-serif;color:#8c8c8c;"><span style="font:7.0px/10px 'Liberation Sans',sans-serif;letter-spacing:0.559px;">11</span></div>
<div class="t" style="left:367.8px;top:248.63px;font:bold 8.0px/11px 'Liberation Mono',monospace;color:#1e1e1e;"><span style="font:bold 8.0px/11px 'Liberation Mono',monospace;color:#f28c38;letter-spacing:0.163px;">def</span><span style="font:bold 8.0px/11px 'Liberation Mono',monospace;color:#1e1e1e;letter-spacing:0.164px;"> restock(stock_dict, product, num_items):</span></div>
<div class="t" style="left:355.1px;top:261.50px;font:7.0px/10px 'Liberation Sans',sans-serif;color:#8c8c8c;"><span style="font:7.0px/10px 'Liberation Sans',sans-serif;letter-spacing:0.302px;">12</span></div>
<div class="t" style="left:367.8px;top:260.17px;font:bold 8.0px/11px 'Liberation Mono',monospace;color:#1e1e1e;"><span style="font:bold 8.0px/11px 'Liberation Mono',monospace;color:#1e1e1e;letter-spacing:0.160px;">  </span><span style="font:bold 8.0px/11px 'Liberation Mono',monospace;color:#f28c38;letter-spacing:0.160px;">if</span><span style="font:bold 8.0px/11px 'Liberation Mono',monospace;color:#1e1e1e;letter-spacing:0.164px;"> (x[a]-b) &lt; y[a]:</span></div>
<div class="t" style="left:355.1px;top:273.04px;font:7.0px/10px 'Liberation Sans',sans-serif;color:#8c8c8c;"><span style="font:7.0px/10px 'Liberation Sans',sans-serif;letter-spacing:0.302px;">13</span></div>
<div class="t" style="left:367.8px;top:271.70px;font:bold 8.0px/11px 'Liberation Mono',monospace;color:#1e1e1e;"><span style="font:bold 8.0px/11px 'Liberation Mono',monospace;color:#1e1e1e;letter-spacing:0.164px;">    x[a] = (x[a] - b) + (y[a]*2)</span></div>
<div class="t" style="left:355.1px;top:284.57px;font:7.0px/10px 'Liberation Sans',sans-serif;color:#8c8c8c;"><span style="font:7.0px/10px 'Liberation Sans',sans-serif;letter-spacing:0.302px;">14</span></div>
<div class="t" style="left:367.8px;top:283.24px;font:bold 8.0px/11px 'Liberation Mono',monospace;color:#1e1e1e;"><span style="font:bold 8.0px/11px 'Liberation Mono',monospace;color:#1e1e1e;letter-spacing:0.164px;">    </span><span style="font:bold 8.0px/11px 'Liberation Mono',monospace;color:#f28c38;letter-spacing:0.163px;">return</span><span style="font:bold 8.0px/11px 'Liberation Mono',monospace;color:#1e1e1e;letter-spacing:0.152px;">(</span><span style="font:bold 8.0px/11px 'Liberation Mono',monospace;color:#4cae4f;letter-spacing:0.163px;">&#x27;5&#x27;</span><span style="font:bold 8.0px/11px 'Liberation Mono',monospace;color:#1e1e1e;letter-spacing:0.152px;">)</span></div>
<div class="t" style="left:355.1px;top:296.11px;font:7.0px/10px 'Liberation Sans',sans-serif;color:#8c8c8c;"><span style="font:7.0px/10px 'Liberation Sans',sans-serif;letter-spacing:0.302px;">15</span></div>
<div class="t" style="left:367.8px;top:294.77px;font:bold 8.0px/11px 'Liberation Mono',monospace;color:#1e1e1e;"><span style="font:bold 8.0px/11px 'Liberation Mono',monospace;color:#1e1e1e;letter-spacing:0.160px;">  </span><span style="font:bold 8.0px/11px 'Liberation Mono',monospace;color:#f28c38;letter-spacing:0.164px;">else</span><span style="font:bold 8.0px/11px 'Liberation Mono',monospace;color:#1e1e1e;letter-spacing:0.152px;">:</span></div>
<div class="t" style="left:355.1px;top:307.65px;font:7.0px/10px 'Liberation Sans',sans-serif;color:#8c8c8c;"><span style="font:7.0px/10px 'Liberation Sans',sans-serif;letter-spacing:0.302px;">16</span></div>
<div class="t" style="left:367.8px;top:306.31px;font:bold 8.0px/11px 'Liberation Mono',monospace;color:#1e1e1e;"><span style="font:bold 8.0px/11px 'Liberation Mono',monospace;color:#1e1e1e;letter-spacing:0.164px;">    x[a] = x[a] - b</span></div>
<div class="t" style="left:355.1px;top:319.18px;font:7.0px/10px 'Liberation Sans',sans-serif;color:#8c8c8c;"><span style="font:7.0px/10px 'Liberation Sans',sans-serif;letter-spacing:0.302px;">17</span></div>
<div class="t" style="left:367.8px;top:317.84px;font:bold 8.0px/11px 'Liberation Mono',monospace;color:#1e1e1e;"><span style="font:bold 8.0px/11px 'Liberation Mono',monospace;color:#1e1e1e;letter-spacing:0.164px;">    </span><span style="font:bold 8.0px/11px 'Liberation Mono',monospace;color:#f28c38;letter-spacing:0.163px;">return</span><span style="font:bold 8.0px/11px 'Liberation Mono',monospace;color:#1e1e1e;letter-spacing:0.152px;">(</span><span style="font:bold 8.0px/11px 'Liberation Mono',monospace;color:#4cae4f;letter-spacing:0.163px;">&#x27;4&#x27;</span><span style="font:bold 8.0px/11px 'Liberation Mono',monospace;color:#1e1e1e;letter-spacing:0.152px;">)</span></div>
<div class="t" style="left:355.1px;top:330.71px;font:7.0px/10px 'Liberation Sans',sans-serif;color:#8c8c8c;"><span style="font:7.0px/10px 'Liberation Sans',sans-serif;letter-spacing:0.302px;">18</span></div>
<div class="t" style="left:367.8px;top:329.38px;font:bold 8.0px/11px 'Liberation Mono',monospace;color:#1e1e1e;"><span style="font:bold 8.0px/11px 'Liberation Mono',monospace;color:#1e1e1e;letter-spacing:0.160px;">  </span><span style="font:bold 8.0px/11px 'Liberation Mono',monospace;color:#e0202a;letter-spacing:0.164px;"># Takes a stock dictionary, a product name and the number of items to add.</span></div>
<div class="t" style="left:368.1px;top:345.36px;font:9.3px/13px 'Liberation Sans',sans-serif;color:#3a7ab8;"><span style="font:9.3px/13px 'Liberation Sans',sans-serif;letter-spacing:-0.347px;">Submissions</span></div>
<div class="t" style="left:443.9px;top:345.36px;font:9.3px/13px 'Liberation Sans',sans-serif;color:#333;"><span style="font:9.3px/13px 'Liberation Sans',sans-serif;letter-spacing:0.196px;">Output</span></div>
<div class="t" style="left:374.3px;top:365.94px;font:9px/13px 'Liberation Sans',sans-serif;color:#fff;"><span style="font:9px/13px 'Liberation Sans',sans-serif;letter-spacing:-0.058px;">#5</span></div>
<div class="t" style="left:394.1px;top:365.94px;font:9px/13px 'Liberation Sans',sans-serif;color:#fff;"><span style="font:9px/13px 'Liberation Sans',sans-serif;letter-spacing:-0.131px;">Passed all tests!</span></div>
<div class="t" style="left:676.3px;top:366.06px;font:9.3px/13px 'Liberation Sans',sans-serif;color:#fff;"><span style="font:9.3px/13px 'Liberation Sans',sans-serif;letter-spacing:0.193px;">2021-03-18 11:26:14</span></div>
<div class="t" style="left:777.0px;top:366.06px;font:9.3px/13px 'Liberation Sans',sans-serif;color:#333;"><span style="font:9.3px/13px 'Liberation Sans',sans-serif;letter-spacing:-0.121px;">View Raw</span></div>
<div class="t" style="left:835.8px;top:366.06px;font:9.3px/13px 'Liberation Sans',sans-serif;color:#62ba5f;"><span style="font:9.3px/13px 'Liberation Sans',sans-serif;letter-spacing:-0.031px;">Current</span></div>
<div class="t" style="left:376.1px;top:387.64px;font:9px/13px 'Liberation Sans',sans-serif;color:#333;"><span style="font:9px/13px 'Liberation Sans',sans-serif;letter-spacing:0.079px;">Testing the first example.</span></div>
<div class="t" style="left:376.1px;top:405.04px;font:9px/13px 'Liberation Sans',sans-serif;color:#333;"><span style="font:9px/13px 'Liberation Sans',sans-serif;letter-spacing:0.038px;">Testing the second example.</span></div>
<div class="t" style="left:376.1px;top:422.44px;font:9px/13px 'Liberation Sans',sans-serif;color:#333;"><span style="font:9px/13px 'Liberation Sans',sans-serif;letter-spacing:0.021px;">Testing another regular week.</span></div>
<div class="t" style="left:376.1px;top:439.84px;font:9px/13px 'Liberation Sans',sans-serif;color:#333;"><span style="font:9px/13px 'Liberation Sans',sans-serif;letter-spacing:0.047px;">Testing what happens if nothing is sold.</span></div>
<div class="t" style="left:376.1px;top:457.24px;font:9px/13px 'Liberation Sans',sans-serif;color:#333;"><span style="font:9px/13px 'Liberation Sans',sans-serif;letter-spacing:0.063px;">Testing a very popular product that keeps getting sold out.</span></div>
<div class="t" style="left:376.1px;top:474.64px;font:9px/13px 'Liberation Sans',sans-serif;color:#333;"><span style="font:9px/13px 'Liberation Sans',sans-serif;letter-spacing:0.116px;">Testing a starting stock with completely different products.</span></div>
<!-- window right edge + bottom bar -->
<div class="a" style="left:884px;top:12px;width:1px;height:474px;background:#d04a5c"></div>
<div class="a" style="left:885px;top:12px;width:1px;height:474px;background:#e9a9b2"></div>
<div class="a" style="left:0;top:486px;width:887px;height:13px;background:#000"></div>
</body></html>
